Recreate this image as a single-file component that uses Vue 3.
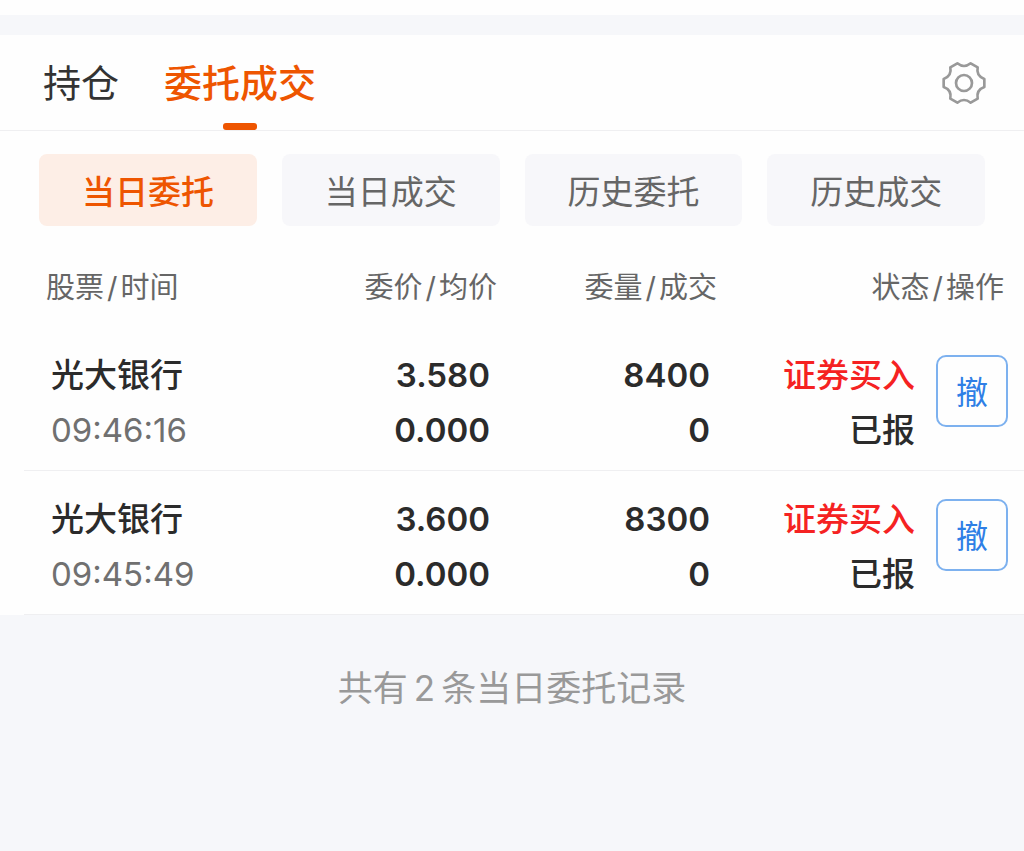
<script setup>
import { ref } from 'vue'

const tabs = ['持仓', '委托成交']
const activeTab = ref('委托成交')

const filters = ['当日委托', '当日成交', '历史委托', '历史成交']
const activeFilter = ref('当日委托')

const orders = [
  { name: '光大银行', time: '09:46:16', price: '3.580', average: '0.000', amount: '8400', filled: '0', side: '证券买入', status: '已报' },
  { name: '光大银行', time: '09:45:49', price: '3.600', average: '0.000', amount: '8300', filled: '0', side: '证券买入', status: '已报' },
]
</script>

<template>
  <main class="page">
    <section class="panel">
      <header class="top">
        <nav class="tabs">
          <button
            v-for="tab in tabs"
            :key="tab"
            type="button"
            class="tab"
            :class="{ active: tab === activeTab }"
            @click="activeTab = tab"
          >{{ tab }}</button>
        </nav>
        <button type="button" class="settings" aria-label="设置">
          <svg viewBox="-66 -66 132 132" width="44" height="44" fill="none" stroke="#999" stroke-width="8" stroke-linejoin="round">
            <path d="M61 -12 L61 12 Q36 21 41 47 L20 59 Q0 43 -20 59 L-41 47 Q-36 21 -61 12 L-61 -12 Q-36 -21 -41 -47 L-20 -59 Q0 -43 20 -59 L41 -47 Q36 -21 61 -12 Z" />
            <circle r="24" />
          </svg>
        </button>
      </header>

      <div class="filters">
        <button
          v-for="filter in filters"
          :key="filter"
          type="button"
          class="filter"
          :class="{ active: filter === activeFilter }"
          @click="activeFilter = filter"
        >{{ filter }}</button>
      </div>

      <table class="orders">
        <colgroup>
          <col class="col-stock" />
          <col class="col-price" />
          <col class="col-amount" />
          <col />
          <col class="col-action" />
        </colgroup>
        <thead>
          <tr>
            <th scope="col" class="stock">股票<span class="slash">/</span>时间</th>
            <th scope="col">委价<span class="slash">/</span>均价</th>
            <th scope="col">委量<span class="slash">/</span>成交</th>
            <th scope="col" colspan="2" class="state">状态<span class="slash">/</span>操作</th>
          </tr>
        </thead>
        <tbody>
          <tr v-for="order in orders" :key="order.time">
            <td class="stock">
              <div>{{ order.name }}</div>
              <div class="time">{{ order.time }}</div>
            </td>
            <td>
              <div>{{ order.price }}</div>
              <div>{{ order.average }}</div>
            </td>
            <td>
              <div>{{ order.amount }}</div>
              <div>{{ order.filled }}</div>
            </td>
            <td class="status">
              <div class="buy">{{ order.side }}</div>
              <div>{{ order.status }}</div>
            </td>
            <td class="action">
              <button type="button" class="cancel">撤</button>
            </td>
          </tr>
        </tbody>
      </table>
    </section>

    <p class="summary">共有<span class="count">2</span>条当日委托记录</p>
  </main>
</template>

<style>
body {
  background: #f6f7fa;
}
</style>

<style scoped>
.page {
  border-top: 15px solid #fefefe;
  padding-top: 20px;
  background: #f6f7fa;
  font-family: Inter, "Noto Sans CJK SC", sans-serif;
  color: #2b2b2b;
}

button {
  margin: 0;
  padding: 0;
  border: 0;
  background: none;
  font-family: inherit;
  color: inherit;
  cursor: pointer;
}

.panel {
  background: #fefefe;
}

.top {
  display: flex;
  align-items: center;
  justify-content: space-between;
  height: 95px;
  padding: 0 38px 0 43px;
  border-bottom: 1px solid #efeff1;
}

.tabs {
  display: flex;
  gap: 45px;
  height: 100%;
}

.tab {
  position: relative;
  font-size: 38px;
  line-height: 56px;
  color: #333;
}

.tab.active {
  font-weight: 500;
  color: #ee5500;
}

.tab.active::after {
  content: "";
  position: absolute;
  bottom: 0;
  left: 50%;
  width: 34px;
  height: 7px;
  margin-left: -17px;
  border-radius: 3px;
  background: #ee5500;
}

.settings,
.settings svg {
  display: block;
}

.filters {
  display: grid;
  grid-template-columns: repeat(4, 1fr);
  gap: 25px;
  padding: 23px 39px 0;
}

.filter {
  height: 72px;
  border-radius: 8px;
  background: #f7f7fa;
  font-size: 33px;
  color: #666;
}

.filter.active {
  background: #fdeee6;
  font-weight: 500;
  color: #ee5500;
}

.orders {
  width: calc(100% - 24px);
  margin-left: 24px;
  border-collapse: separate;
  border-spacing: 0;
  table-layout: fixed;
}

.col-stock {
  width: 28%;
}

.col-price {
  width: 20%;
}

.col-amount {
  width: 22%;
}

.col-action {
  width: 104px;
}

th {
  padding: 40px 7px 17px 0;
  font-size: 29px;
  line-height: 44px;
  font-weight: 400;
  text-align: right;
  color: #666;
}

th.stock {
  padding-left: 22px;
  text-align: left;
}

th.state {
  padding-right: 20px;
}

.slash {
  margin: 0 3px;
}

td {
  padding: 21px 14px 12px 0;
  border-bottom: 1px solid #efeff1;
  font-size: 33px;
  line-height: 55px;
  font-weight: 500;
  text-align: right;
  vertical-align: top;
}

td:not(.stock):not(.status) {
  font-weight: 600;
}

td.stock {
  padding-left: 27px;
  text-align: left;
}

td.status {
  padding-right: 5px;
}

.time {
  font-weight: 400;
  color: #707070;
}

.buy {
  color: #f52222;
}

td.action {
  padding: 28px 16px 0 0;
}

.cancel {
  display: block;
  width: 72px;
  height: 72px;
  margin-left: auto;
  padding-bottom: 3px;
  border: 2px solid #7db1ef;
  border-radius: 10px;
  font-size: 32px;
  color: #2f7fe6;
}

.summary {
  margin: 0;
  padding: 46px 0 80px;
  font-size: 35px;
  line-height: 54px;
  text-align: center;
  color: #999;
}

.count {
  margin: 0 6px;
}
</style>
